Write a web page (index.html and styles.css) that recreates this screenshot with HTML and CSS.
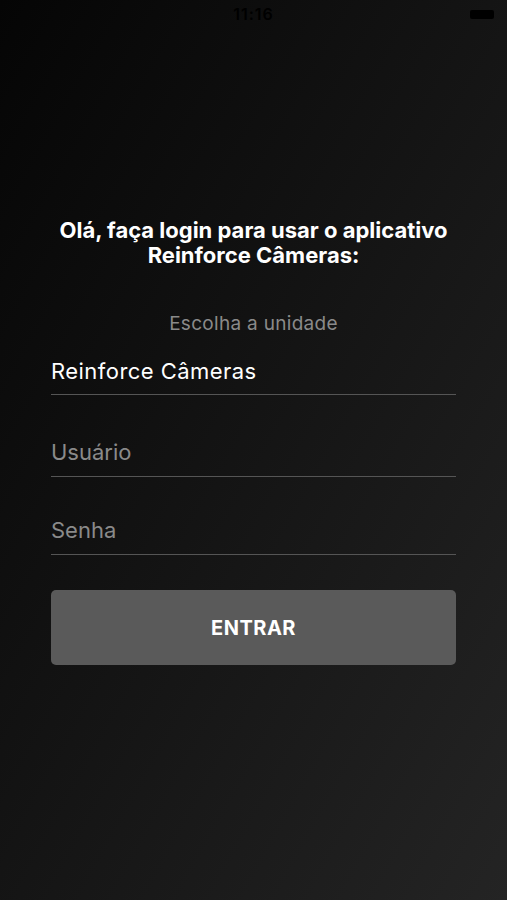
FILE: index.html
```html
<!DOCTYPE html>
<html lang="pt-BR">

<head>
    <meta charset="UTF-8">
    <meta name="viewport" content="width=device-width, initial-scale=1.0">
    <title>Reinforce Câmeras</title>
    <link rel="stylesheet" href="styles.css">
</head>

<body>
    <div class="status-bar">
        <span class="status-time">11:16</span>
        <span class="battery"></span>
    </div>

    <main class="login">
        <h1 class="login-title">Olá, faça login para usar o aplicativo Reinforce Câmeras:</h1>
        <p class="login-hint">Escolha a unidade</p>

        <div class="field field-select">Reinforce Câmeras</div>
        <div class="field field-user">
            <input type="text" placeholder="Usuário">
        </div>
        <div class="field field-pass">
            <input type="password" placeholder="Senha">
        </div>

        <button class="login-button">ENTRAR</button>
    </main>
</body>

</html>
```

FILE: styles.css
```css
:root {
    --text-color: #fff;
    --subtext-color: #8a8a8a;
    --line-color: #555;
    --button-color: #5a5a5a;
}

* {
    margin: 0;
    padding: 0;
    box-sizing: border-box;
}

body {
    width: 507px;
    height: 900px;
    font-family: Inter, Roboto, "Liberation Sans", sans-serif;
    color: var(--text-color);
    background: linear-gradient(to bottom right, #050505, #242424);
    overflow: hidden;
}

.status-bar {
    position: relative;
    height: 20px;
    display: flex;
    align-items: center;
    justify-content: center;
}

.status-time {
    font-size: 16px;
    font-weight: 600;
    letter-spacing: 1px;
    color: #000;
    padding-top: 8px;
}

.battery {
    position: absolute;
    top: 10px;
    right: 13px;
    width: 24px;
    height: 9px;
    border-radius: 2px;
    background: #000;
}

.login {
    padding: 0 51px;
    display: flex;
    flex-direction: column;
}

.login-title {
    margin-top: 198px;
    font-size: 22px;
    font-weight: 700;
    line-height: 25px;
    text-align: center;
}

.login-hint {
    margin-top: 45px;
    font-size: 19px;
    line-height: 22px;
    letter-spacing: 0.3px;
    text-align: center;
    color: var(--subtext-color);
}

.field {
    padding: 40px 0 11px;
    border-bottom: 1px solid var(--line-color);
    font-size: 22px;
    line-height: 26px;
}

.field-select {
    padding-top: 23px;
    padding-bottom: 10px;
    letter-spacing: 0.45px;
}

.field-user {
    padding-top: 44px;
}

.field input {
    display: block;
    width: 100%;
    height: 26px;
    border: none;
    outline: none;
    background: transparent;
    font-family: inherit;
    font-size: 22px;
    color: var(--text-color);
}

.field input::placeholder {
    color: var(--subtext-color);
}

.login-button {
    margin-top: 35px;
    height: 75px;
    border: none;
    border-radius: 5px;
    background: var(--button-color);
    color: var(--text-color);
    font-family: inherit;
    font-size: 20px;
    font-weight: 700;
    letter-spacing: 0.5px;
    cursor: pointer;
}
```
